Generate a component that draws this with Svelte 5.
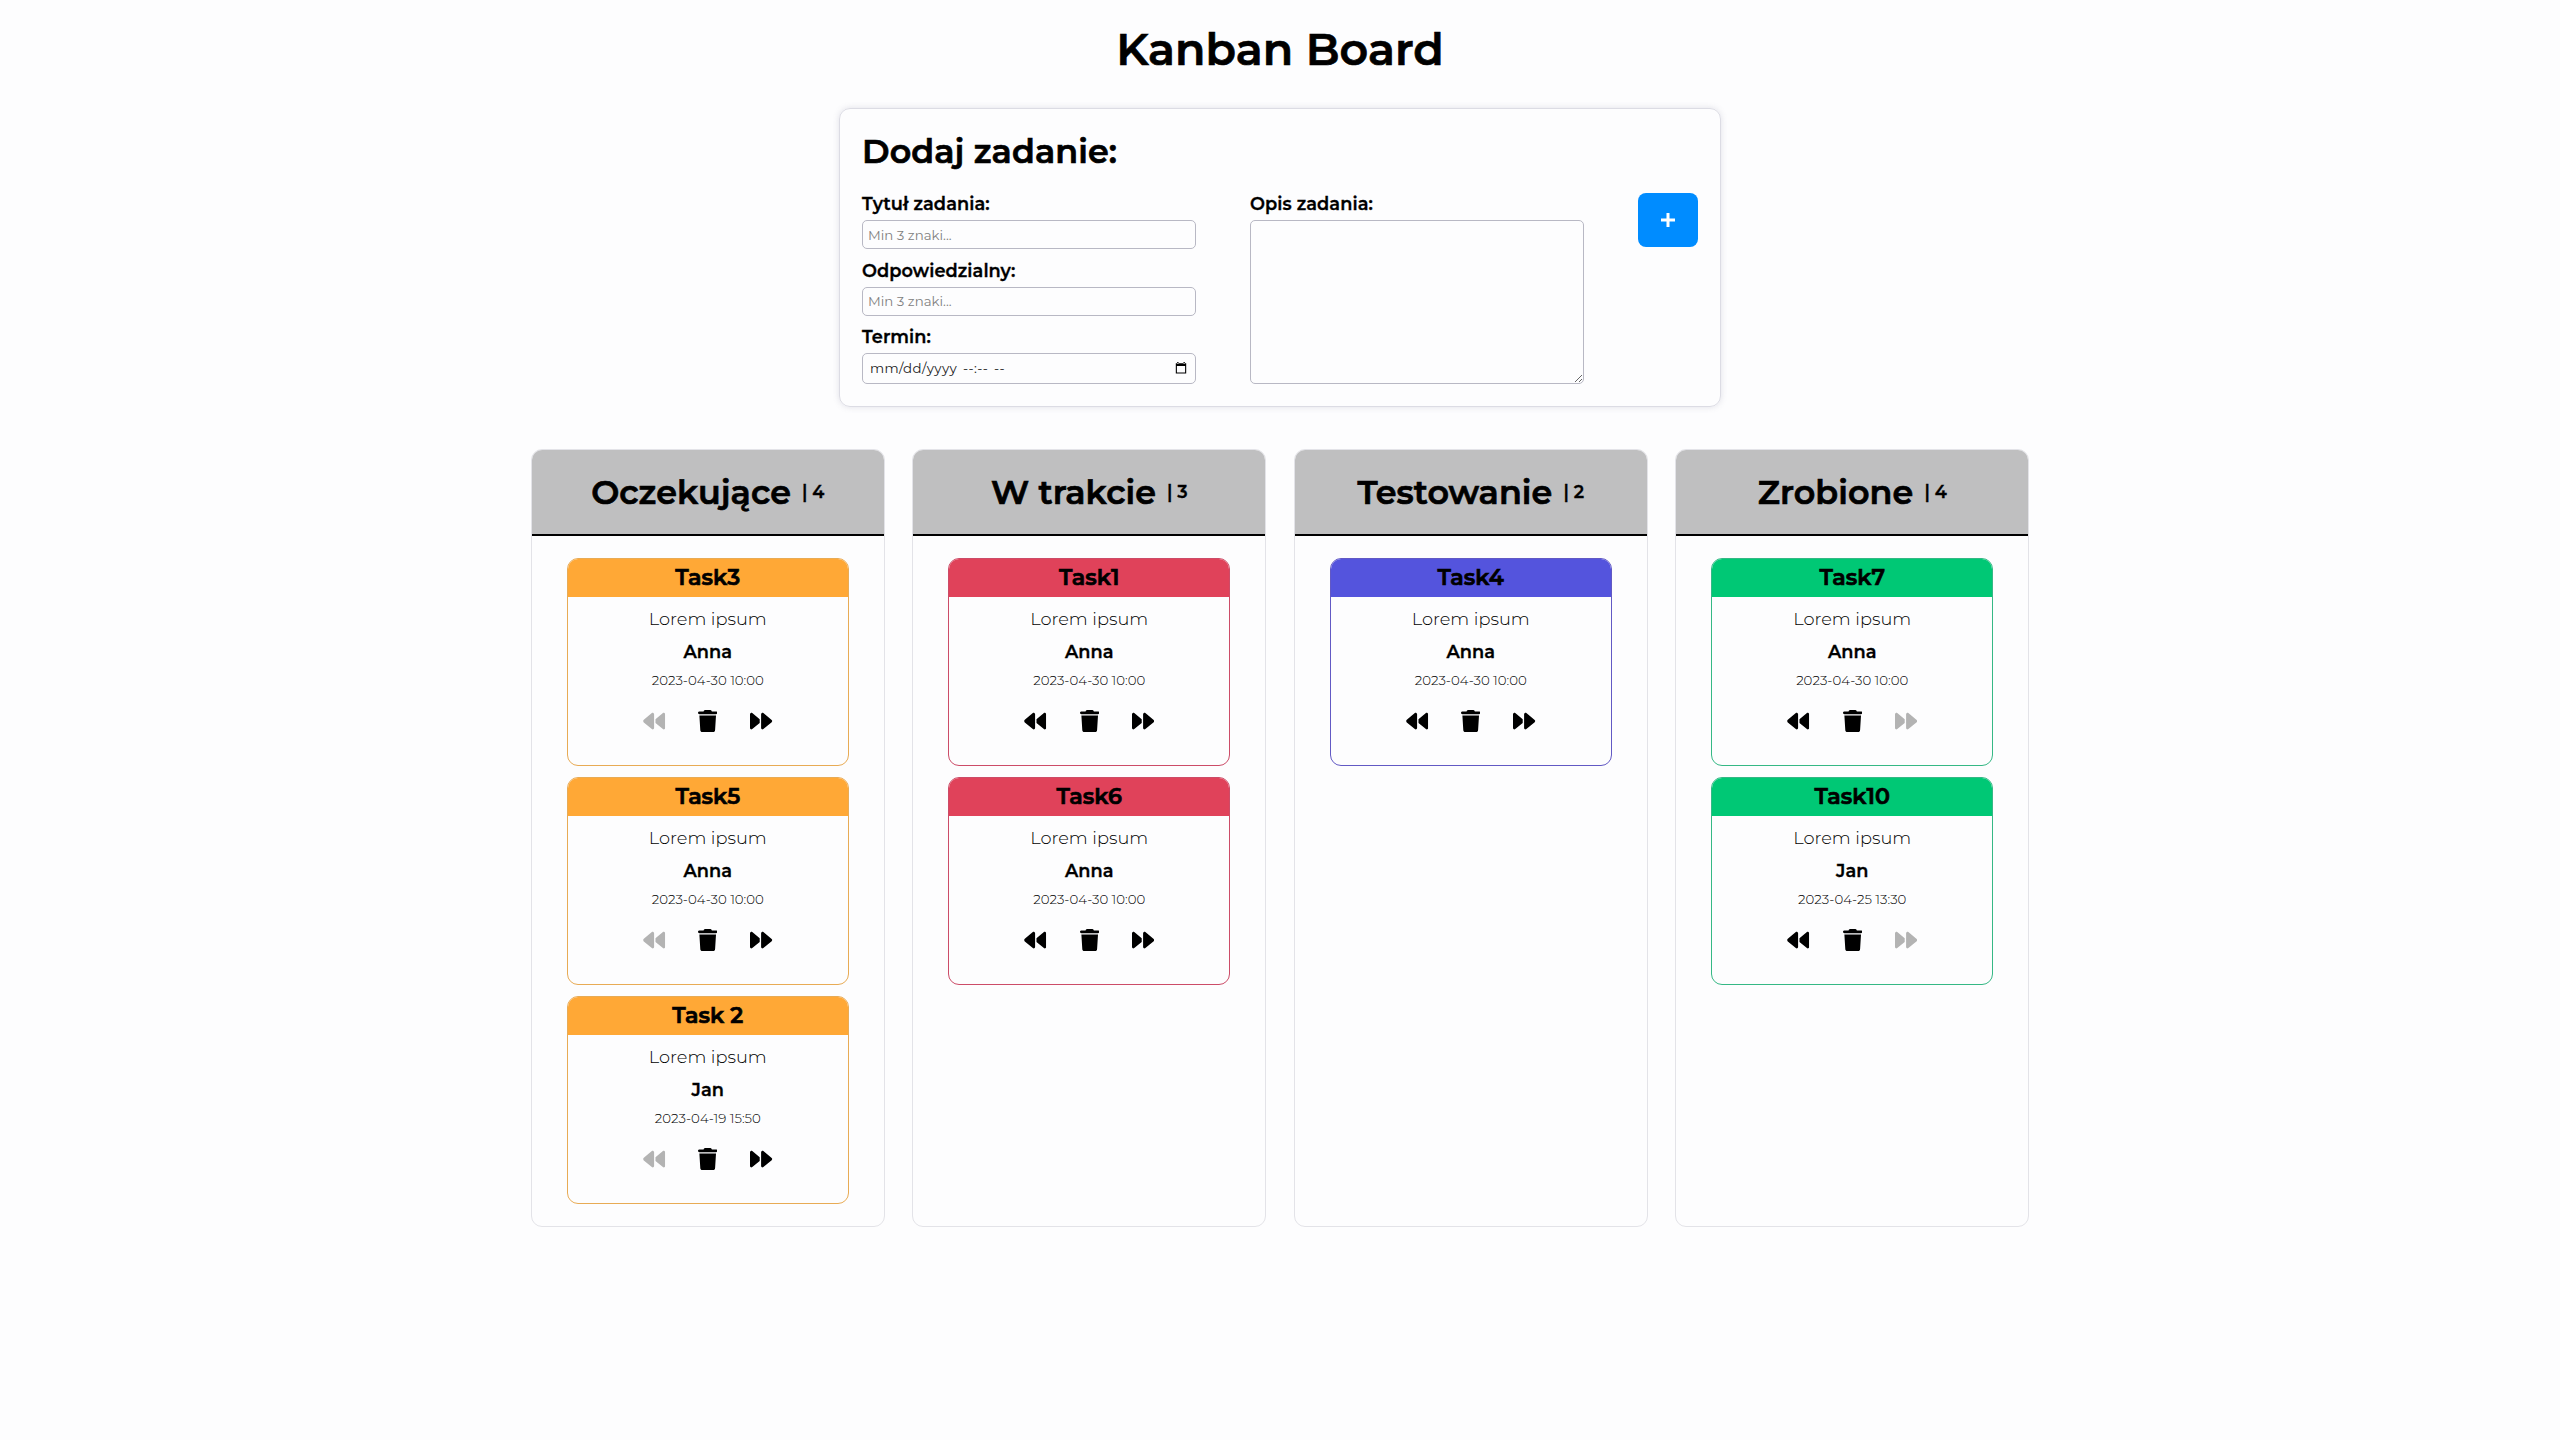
<script>
  const columns = [
    {
      title: 'Oczekujące', kind: 'pending', count: 4,
      tasks: [
        { name: 'Task3', who: 'Anna', date: '2023-04-30 10:00' },
        { name: 'Task5', who: 'Anna', date: '2023-04-30 10:00' },
        { name: 'Task 2', who: 'Jan', date: '2023-04-19 15:50' }
      ]
    },
    {
      title: 'W trakcie', kind: 'progress', count: 3,
      tasks: [
        { name: 'Task1', who: 'Anna', date: '2023-04-30 10:00' },
        { name: 'Task6', who: 'Anna', date: '2023-04-30 10:00' }
      ]
    },
    {
      title: 'Testowanie', kind: 'testing', count: 2,
      tasks: [{ name: 'Task4', who: 'Anna', date: '2023-04-30 10:00' }]
    },
    {
      title: 'Zrobione', kind: 'done', count: 4,
      tasks: [
        { name: 'Task7', who: 'Anna', date: '2023-04-30 10:00' },
        { name: 'Task10', who: 'Jan', date: '2023-04-25 13:30' }
      ]
    }
  ];
</script>

{#snippet forward()}
  <svg viewBox="0 0 512 512" width="22.2" height="22.2" aria-hidden="true">
    <path d="M52.5 440.6c-9.5 7.9-22.8 9.7-34.1 4.4S0 428.4 0 416V96C0 83.6 7.2 72.3 18.4 67s24.5-3.6 34.1 4.4L224 214.3V297.7L52.5 440.6zM256 352V96c0-12.4 7.2-23.7 18.4-29s24.5-3.6 34.1 4.4l192 160c7.3 6.1 11.5 15.1 11.5 24.6s-4.2 18.5-11.5 24.6l-192 160c-9.5 7.9-22.8 9.7-34.1 4.4s-18.4-16.6-18.4-29V352z" />
  </svg>
{/snippet}

<main>
  <h1>Kanban Board</h1>

  <form class="panel">
    <h2>Dodaj zadanie:</h2>
    <div class="fields">
      <div class="group">
        <label for="title">Tytuł zadania:</label>
        <input id="title" type="text" placeholder="Min 3 znaki..." />
        <label for="owner">Odpowiedzialny:</label>
        <input id="owner" type="text" placeholder="Min 3 znaki..." />
        <label for="due">Termin:</label>
        <button id="due" class="due" type="button">
          <span>mm/dd/yyyy --:-- --</span>
          <svg viewBox="0 0 12 12" width="12" height="12" aria-hidden="true">
            <path d="M0.8 1.2H11.2V11.6H0.8ZM1.9 4V10.5H10.1V4ZM2.2 0H3.5V2H2.2ZM8.5 0H9.8V2H8.5Z" fill-rule="evenodd" />
          </svg>
        </button>
      </div>
      <div class="group">
        <label for="desc">Opis zadania:</label>
        <textarea id="desc"></textarea>
      </div>
      <button class="add" type="button" aria-label="Dodaj">
        <svg viewBox="0 0 14 14" width="14" height="14"><path d="M7 0V14M0 7H14" /></svg>
      </button>
    </div>
  </form>

  <div class="board">
    {#each columns as col}
      <section class="column {col.kind}">
        <header>
          <h2>{col.title}</h2>
          <span class="count">| {col.count}</span>
        </header>
        <ul>
          {#each col.tasks as task}
            <li>
              <h3>{task.name}</h3>
              <p class="desc">Lorem ipsum</p>
              <p class="who">{task.who}</p>
              <p class="date">{task.date}</p>
              <div class="actions">
                <button type="button" class="back" disabled={col.kind === 'pending'} aria-label="Wstecz">
                  {@render forward()}
                </button>
                <button type="button" aria-label="Usuń">
                  <svg viewBox="0 0 448 512" width="19.4" height="22.2" aria-hidden="true">
                    <path d="M135.2 17.7L128 32H32C14.3 32 0 46.3 0 64S14.3 96 32 96H416c17.7 0 32-14.3 32-32s-14.3-32-32-32H320l-7.2-14.3C307.4 6.8 296.3 0 284.2 0H163.8c-12.1 0-23.2 6.8-28.6 17.7zM416 128H32L53.2 467c1.6 25.3 22.6 45 47.9 45H346.9c25.3 0 46.3-19.7 47.9-45L416 128z" />
                  </svg>
                </button>
                <button type="button" disabled={col.kind === 'done'} aria-label="Dalej">
                  {@render forward()}
                </button>
              </div>
            </li>
          {/each}
        </ul>
      </section>
    {/each}
  </div>
</main>

<style>
  :global(body) {
    background: #fdfdfe;
    color: #000;
    font-family: Montserrat, Inter, sans-serif;
  }
  main {
    display: flex;
    flex-direction: column;
    align-items: center;
  }
  h1, h2, h3, p, ul { margin: 0; padding: 0; font-weight: 600; white-space: nowrap; }
  h1, h2, h3 { -webkit-text-stroke: 0.7px #000; }
  label, .who, .count { -webkit-text-stroke: 0.3px #000; }
  h1 {
    padding-top: 22px;
    font-size: 44.44px;
    line-height: 54px;
    letter-spacing: 0.05px;
  }
  .panel {
    box-sizing: border-box;
    width: 882px;
    height: 299px;
    margin-top: 32px;
    padding: 21px 21.5px 22px 22px;
    border: 1px solid #dcdce4;
    border-radius: 11px;
    box-shadow: 0 0 6px rgba(110, 110, 140, 0.2);
  }
  h2 {
    font-size: 33.33px;
    line-height: 42px;
    letter-spacing: 0.1px;
  }
  .fields {
    display: flex;
    gap: 54px;
    align-items: flex-start;
    margin-top: 21px;
  }
  .group {
    display: flex;
    flex-direction: column;
    width: 334px;
  }
  label {
    font-size: 17.78px;
    font-weight: 600;
    line-height: 22px;
    letter-spacing: 0.07px;
    margin-bottom: 5px;
  }
  input, textarea, .due {
    box-sizing: border-box;
    width: 334px;
    border: 1px solid #b8b8c4;
    border-radius: 5px;
    background: transparent;
    color: #000;
    font-family: inherit;
    font-size: 13.33px;
    outline: none;
  }
  input {
    height: 29px;
    padding: 0 5px;
    margin-bottom: 10.5px;
  }
  input::placeholder { color: #808080; }
  .due {
    display: flex;
    align-items: center;
    justify-content: space-between;
    height: 31px;
    padding: 0 8px 1px 7px;
    color: #222;
    white-space: pre;
  }
  .due span {
    letter-spacing: 0.4px;
    word-spacing: 2px;
  }
  textarea { height: 164px; }
  .add {
    display: flex;
    align-items: center;
    justify-content: center;
    width: 60px;
    height: 54px;
    padding: 0;
    border: 0;
    border-radius: 8px;
    background: #008cff;
  }
  .add path { stroke: #fff; stroke-width: 3; }

  .board {
    display: grid;
    grid-template-columns: repeat(4, 353.8px);
    gap: 27.7px;
    margin-top: 42px;
  }
  .column {
    box-sizing: border-box;
    height: 778px;
    border: 1px solid #e3e3e8;
    border-radius: 11px;
    overflow: hidden;
  }
  header {
    display: flex;
    align-items: center;
    justify-content: center;
    gap: 11px;
    height: 84px;
    border-bottom: 2px solid #000;
    background: #bfbfc0;
  }
  .count {
    font-size: 17.78px;
    font-weight: 600;
    line-height: 22px;
  }
  ul {
    display: flex;
    flex-direction: column;
    align-items: center;
    gap: 11px;
    padding-top: 22px;
    list-style: none;
  }
  li {
    box-sizing: border-box;
    width: 282px;
    height: 208px;
    border: 1px solid var(--line);
    border-radius: 11px;
    overflow: hidden;
    text-align: center;
  }
  .pending { --accent: #ffa836; --line: #e8ab55; }
  .progress { --accent: #e0425a; --line: #cc4c68; }
  .testing { --accent: #5454dd; --line: #6259c4; }
  .done { --accent: #00c875; --line: #35b885; }
  h3 {
    height: 38px;
    background: var(--accent);
    font-size: 22.22px;
    line-height: 37px;
  }
  .desc {
    margin-top: 11px;
    font-size: 17.78px;
    font-weight: 300;
    line-height: 22px;
  }
  .who {
    margin-top: 11px;
    font-size: 17.78px;
    line-height: 22px;
  }
  .date {
    margin-top: 9px;
    font-size: 13.33px;
    font-weight: 300;
    line-height: 16px;
  }
  .actions {
    display: flex;
    justify-content: center;
    align-items: center;
    gap: 33px;
    margin-top: 22px;
  }
  .actions button {
    display: flex;
    padding: 0;
    border: 0;
    background: none;
    color: #000;
  }
  .actions button:disabled { color: #b3b3b3; }
  .actions path { fill: currentColor; }
  .back { transform: scaleX(-1); }
</style>
